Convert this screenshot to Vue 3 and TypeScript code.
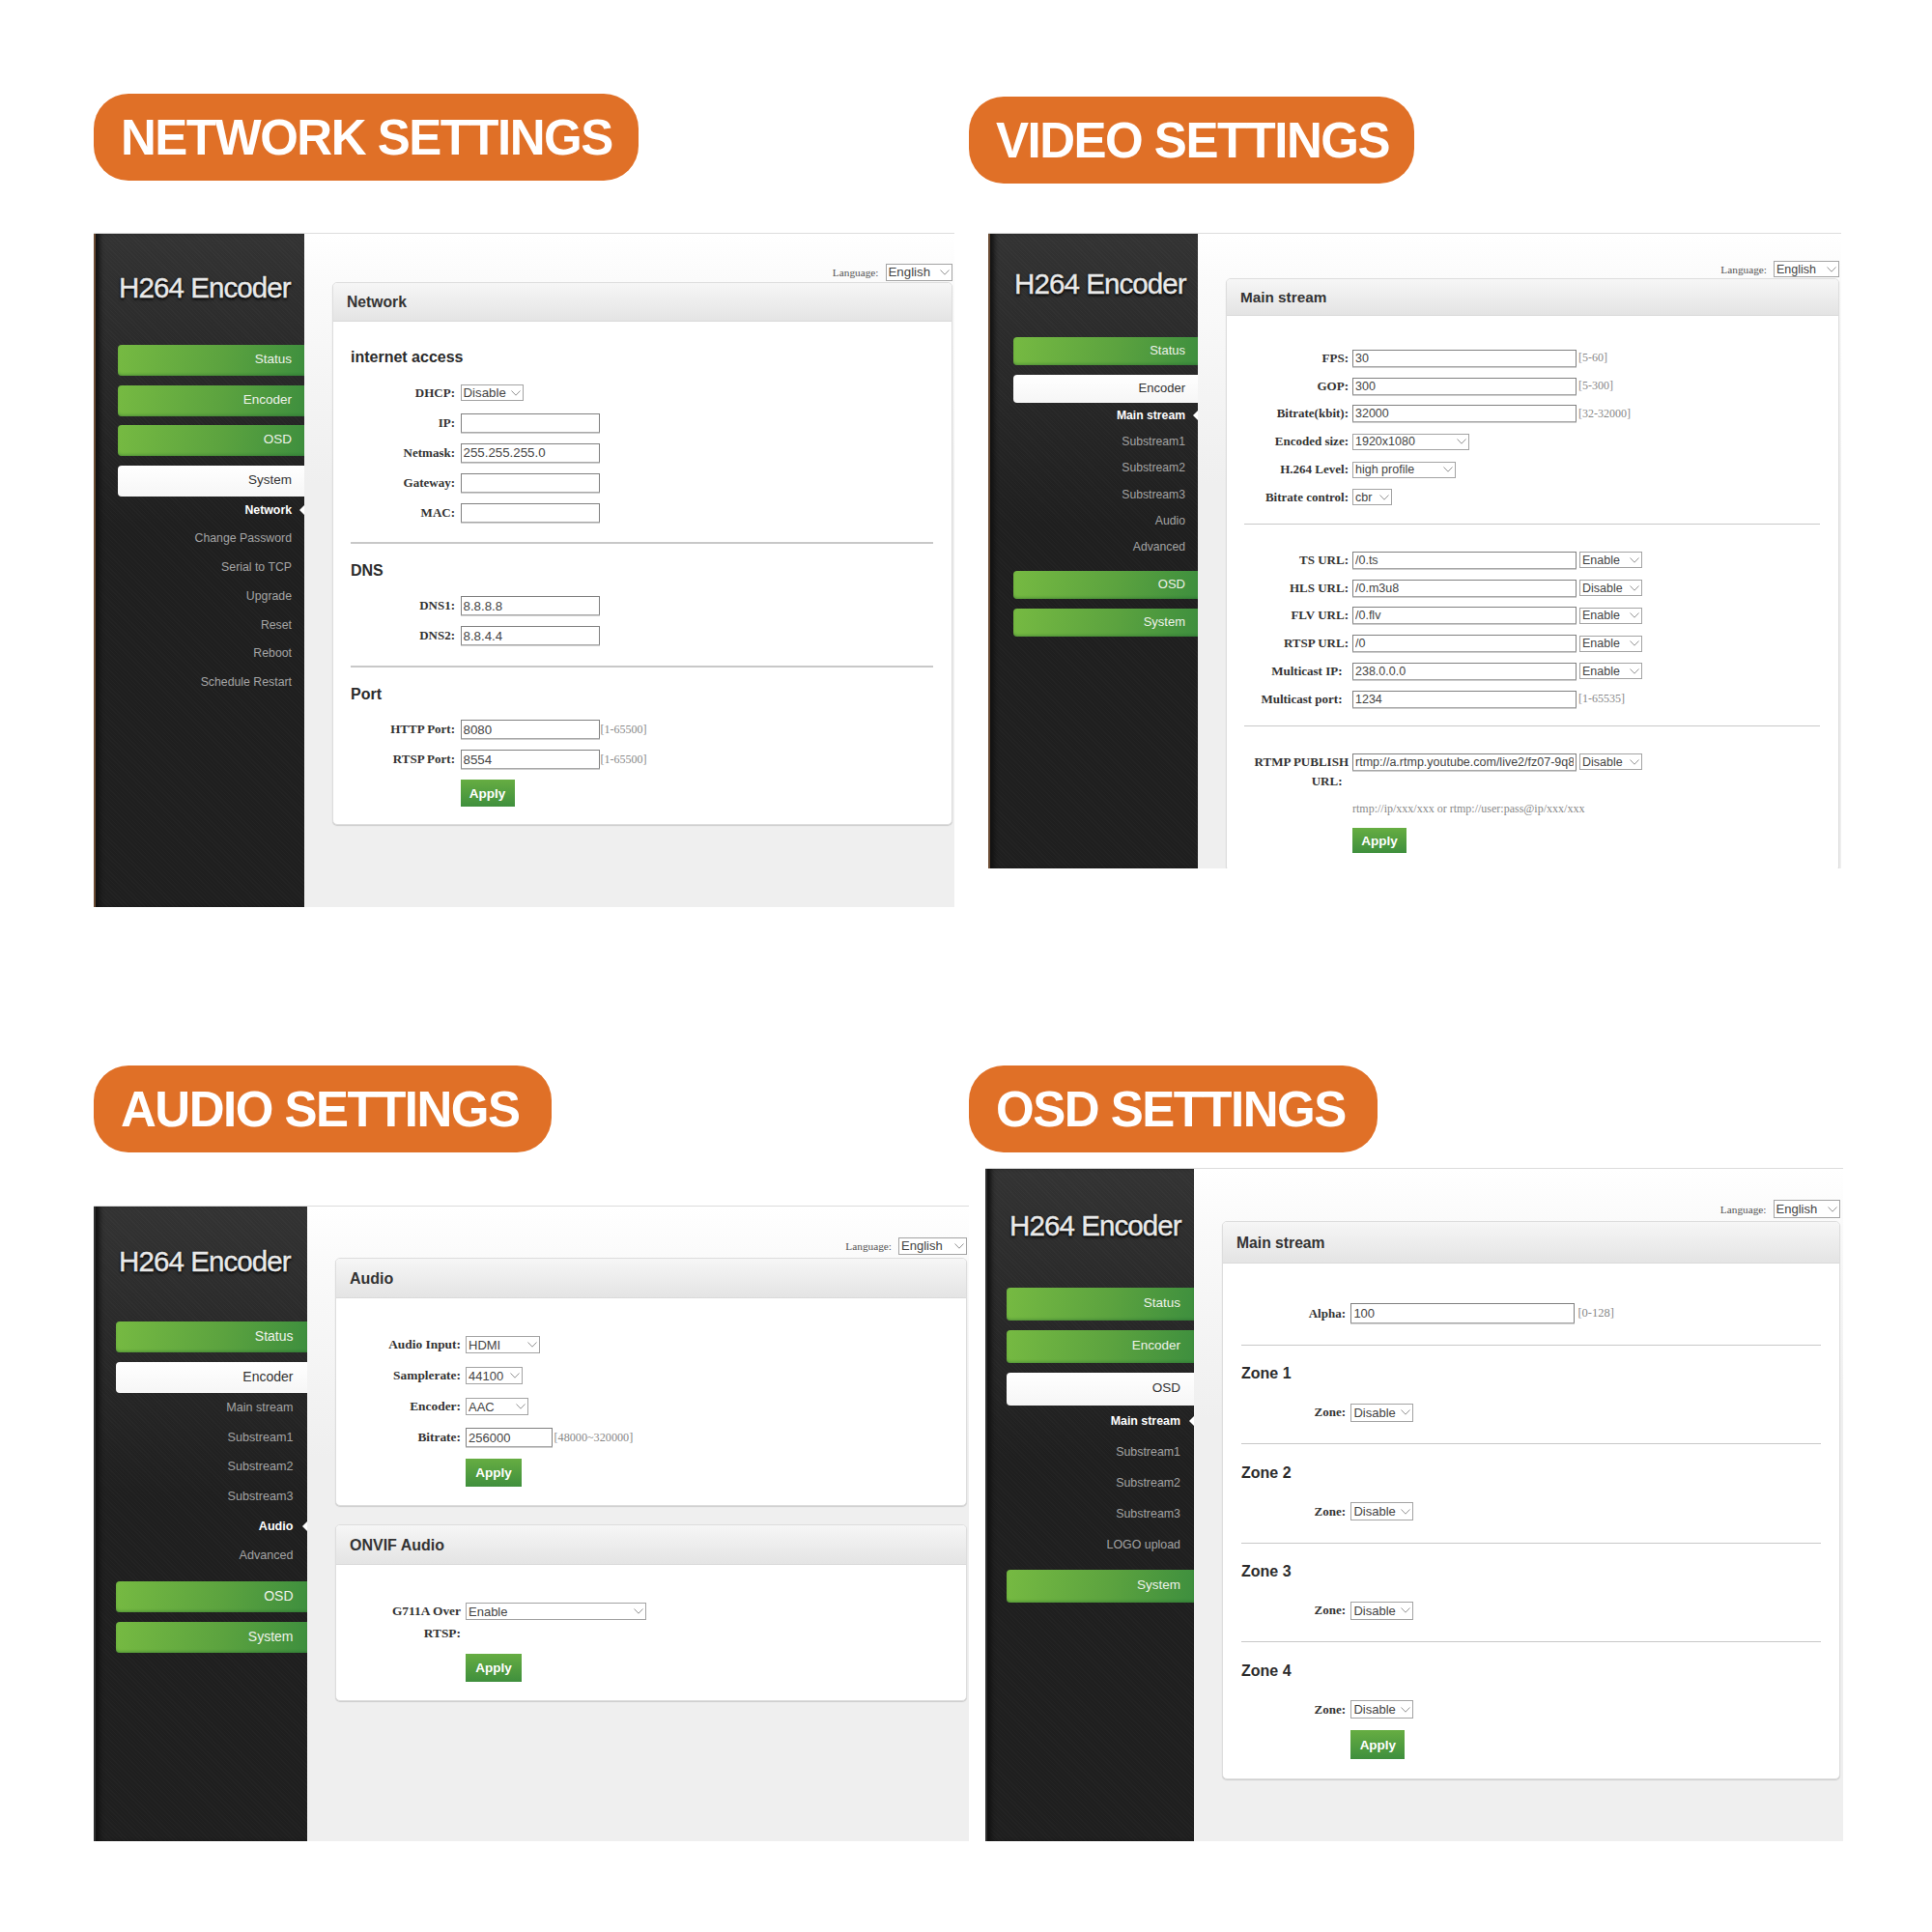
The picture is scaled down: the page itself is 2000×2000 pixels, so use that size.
<template>
  <div class="sheet">
    <section v-for="win in windows" :key="win.key" class="quad" :class="win.key">
      <h1 class="pill">{{ win.pill }}</h1>
      <div class="window">
        <aside class="sidebar">
          <div class="logo"><span>H264 Encoder</span></div>
          <div v-for="item in win.nav" :key="item.label" class="nav-group">
            <div class="nav-btn" :class="{ active: item.subs }">{{ item.label }}</div>
            <div v-if="item.subs" class="sub-list">
              <div
                v-for="sub in item.subs"
                :key="sub"
                class="sub-item"
                :class="{ current: sub === item.current }"
              >{{ sub }}</div>
            </div>
          </div>
        </aside>
        <main class="content">
          <div class="lang-row">
            <span class="lang-label">Language:</span>
            <span class="sel lang-sel">
              <select><option>English</option></select>
              <svg viewBox="0 0 10 6"><path d="M0.5 0.5 5 5.2 9.5 0.5" /></svg>
            </span>
          </div>
          <div v-for="card in win.cards" :key="card.title" class="card">
            <div class="card-head">{{ card.title }}</div>
            <div class="card-body">
              <div v-for="(sec, i) in card.sections" :key="i" class="sec">
                <hr v-if="i > 0" />
                <h3 v-if="sec.heading">{{ sec.heading }}</h3>
                <div v-for="row in sec.rows" :key="row.label + row.value" class="row">
                  <label>{{ row.label }}</label>
                  <div class="ctrl">
                    <span v-if="row.type === 'text'" class="hint">{{ row.value }}</span>
                    <input v-else-if="row.type === 'input'" type="text" :value="row.value" :style="widthOf(row)" />
                    <span v-else class="sel" :style="widthOf(row)">
                      <select><option>{{ row.value }}</option></select>
                      <svg viewBox="0 0 10 6"><path d="M0.5 0.5 5 5.2 9.5 0.5" /></svg>
                    </span>
                    <span v-if="row.hint" class="hint">{{ row.hint }}</span>
                    <span v-if="row.mode" class="sel mode">
                      <select><option>{{ row.mode }}</option></select>
                      <svg viewBox="0 0 10 6"><path d="M0.5 0.5 5 5.2 9.5 0.5" /></svg>
                    </span>
                  </div>
                </div>
              </div>
              <button type="button" class="apply">Apply</button>
            </div>
          </div>
        </main>
      </div>
    </section>
  </div>
</template>

<script setup lang="ts">
interface Row {
  label: string
  type: 'input' | 'select' | 'text'
  value: string
  w?: number
  hint?: string
  mode?: string
}

interface Section {
  heading?: string
  rows: Row[]
}

interface Card {
  title: string
  sections: Section[]
}

interface NavItem {
  label: string
  subs?: string[]
  current?: string
}

interface Win {
  key: string
  pill: string
  nav: NavItem[]
  cards: Card[]
}

const NB = '\u00a0'

function widthOf(row: Row) {
  return row.w ? { width: row.w + 'px' } : undefined
}

function field(label: string, value: string, hint?: string, mode?: string): Row {
  return { label, type: 'input', value, hint, mode }
}

function pick(label: string, value: string, w: number): Row {
  return { label, type: 'select', value, w }
}

const encoderSubs = ['Main stream', 'Substream1', 'Substream2', 'Substream3', 'Audio', 'Advanced']
const zone = (n: number): Section => ({ heading: `Zone ${n}`, rows: [pick('Zone:', 'Disable', 65)] })

const windows: Win[] = [
  {
    key: 'net',
    pill: 'NETWORK SETTINGS',
    nav: [
      { label: 'Status' },
      { label: 'Encoder' },
      { label: 'OSD' },
      {
        label: 'System',
        subs: ['Network', 'Change Password', 'Serial to TCP', 'Upgrade', 'Reset', 'Reboot', 'Schedule Restart'],
        current: 'Network'
      }
    ],
    cards: [
      {
        title: 'Network',
        sections: [
          {
            heading: 'internet access',
            rows: [
              pick('DHCP:', 'Disable', 65),
              field('IP:', ''),
              field('Netmask:', '255.255.255.0'),
              field('Gateway:', ''),
              field('MAC:', '')
            ]
          },
          { heading: 'DNS', rows: [field('DNS1:', '8.8.8.8'), field('DNS2:', '8.8.4.4')] },
          {
            heading: 'Port',
            rows: [field('HTTP Port:', '8080', '[1-65500]'), field('RTSP Port:', '8554', '[1-65500]')]
          }
        ]
      }
    ]
  },
  {
    key: 'vid',
    pill: 'VIDEO SETTINGS',
    nav: [
      { label: 'Status' },
      { label: 'Encoder', subs: encoderSubs, current: 'Main stream' },
      { label: 'OSD' },
      { label: 'System' }
    ],
    cards: [
      {
        title: 'Main stream',
        sections: [
          {
            rows: [
              field('FPS:', '30', '[5-60]'),
              field('GOP:', '300', '[5-300]'),
              field('Bitrate(kbit):', '32000', '[32-32000]'),
              pick('Encoded size:', '1920x1080', 121),
              pick('H.264 Level:', 'high profile', 107),
              pick('Bitrate control:', 'cbr', 41)
            ]
          },
          {
            rows: [
              field('TS URL:', '/0.ts', undefined, 'Enable'),
              field('HLS URL:', '/0.m3u8', undefined, 'Disable'),
              field('FLV URL:', '/0.flv', undefined, 'Enable'),
              field('RTSP URL:', '/0', undefined, 'Enable'),
              field(`Multicast IP:${NB}${NB}`, '238.0.0.0', undefined, 'Enable'),
              field(`Multicast port:${NB}${NB}`, '1234', '[1-65535]')
            ]
          },
          {
            rows: [
              field(`RTMP PUBLISH URL:${NB}${NB}`, 'rtmp://a.rtmp.youtube.com/live2/fz07-9q8', undefined, 'Disable'),
              { label: '', type: 'text', value: 'rtmp://ip/xxx/xxx or rtmp://user:pass@ip/xxx/xxx' }
            ]
          }
        ]
      }
    ]
  },
  {
    key: 'aud',
    pill: 'AUDIO SETTINGS',
    nav: [
      { label: 'Status' },
      { label: 'Encoder', subs: encoderSubs, current: 'Audio' },
      { label: 'OSD' },
      { label: 'System' }
    ],
    cards: [
      {
        title: 'Audio',
        sections: [
          {
            rows: [
              pick('Audio Input:', 'HDMI', 77),
              pick('Samplerate:', '44100', 59),
              pick('Encoder:', 'AAC', 65),
              { label: 'Bitrate:', type: 'input', value: '256000', w: 90, hint: '[48000~320000]' }
            ]
          }
        ]
      },
      {
        title: 'ONVIF Audio',
        sections: [{ rows: [pick('G711A Over RTSP:', 'Enable', 187)] }]
      }
    ]
  },
  {
    key: 'osd',
    pill: 'OSD SETTINGS',
    nav: [
      { label: 'Status' },
      { label: 'Encoder' },
      {
        label: 'OSD',
        subs: ['Main stream', 'Substream1', 'Substream2', 'Substream3', 'LOGO upload'],
        current: 'Main stream'
      },
      { label: 'System' }
    ],
    cards: [
      {
        title: 'Main stream',
        sections: [{ rows: [field('Alpha:', '100', '[0-128]')] }, zone(1), zone(2), zone(3), zone(4)]
      }
    ]
  }
]
</script>

<style>
html,
body {
  margin: 0;
  background: #fff;
}
</style>

<style scoped>
.sheet {
  width: 2000px;
  height: 2000px;
  box-sizing: border-box;
  padding: 97px 0 0 97px;
  display: grid;
  grid-template-columns: 906px 1fr;
  grid-template-rows: 1006px auto;
  font-family: "Liberation Sans", Arial, sans-serif;
}

/* per-window metrics, the four screenshots are not scaled the same */
.net {
  --pill-pr: 27px;
  --win-w: 891px; --win-h: 698px; --win-mt: 54px; --win-ml: 0px; --edge: #6b4c34;
  --logo-h: 112px; --logo-mb: 3px; --logo-pl: 26px;
  --side-w: 218px; --side-pl: 22.5px;
  --btn-h: 32px; --btn-gap: 9.5px; --btn-fs: 13.5px; --btn-pr: 13px;
  --sub-step: 29.8px; --sub-fs: 12.3px;
  --lang-top: 31px; --lang-h: 17.5px; --lang-w: 69px; --card-mt: 1.7px; --pad-r: 2.5px;
  --head-h: 40px; --title-fs: 15.7px;
  --body-pt: 27px; --body-pb: 18px; --hr-mt: 15.3px; --hr-mb: 18px; --h3-mb: 11px;
  --step: 31px; --lh: 20px; --label-w: 108px; --label-gap: 5.5px; --label-fs: 13px;
  --in-w: 144px; --in-h: 20px; --in-fs: 13.3px; --sel-h: 17.5px; --mode-w: 65px;
  --apply-mt: 5.5px; --apply-h: 28px; --apply-w: 56px; --hint-fs: 12px; --hint-gap: 1px; --hr-h: 1.5px; --body-pl: 18px;
}
.vid {
  --pill-pr: 26px;
  --win-w: 883px; --win-h: 658px; --win-mt: 51px; --win-ml: 20px; --edge: #6b4c34;
  --logo-h: 104px; --logo-mb: 2.5px; --logo-pl: 27px;
  --side-w: 217px; --side-pl: 24px;
  --btn-h: 29px; --btn-gap: 10px; --btn-fs: 13px; --btn-pr: 13px;
  --sub-step: 27.4px; --sub-fs: 12.2px;
  --lang-top: 28px; --lang-h: 17px; --lang-w: 68px; --card-mt: 0.5px; --pad-r: 2px;
  --head-h: 38px; --title-fs: 15.3px;
  --body-pt: 30px; --body-pb: 18px; --hr-mt: 12.6px; --hr-mb: 22.6px; --h3-mb: 0px;
  --step: 28.8px; --lh: 20px; --label-w: 108px; --label-gap: 4px; --label-fs: 13px;
  --in-w: 232px; --in-h: 18px; --in-fs: 12.5px; --sel-h: 17px; --mode-w: 65px;
  --apply-mt: 5.5px; --apply-h: 26px; --apply-w: 56px; --hint-fs: 12px; --hint-gap: 2px; --hr-h: 1px; --body-pl: 18px;
}
.aud {
  --pill-pr: 33px;
  --win-w: 906px; --win-h: 658px; --win-mt: 55px; --win-ml: 0px; --edge: #2e2e2e;
  --logo-h: 113px; --logo-mb: 5.5px; --logo-pl: 26px;
  --side-w: 221px; --side-pl: 20.5px;
  --btn-h: 32px; --btn-gap: 10.5px; --btn-fs: 14px; --btn-pr: 14.5px;
  --sub-step: 30.7px; --sub-fs: 12.6px;
  --lang-top: 31.5px; --lang-h: 18px; --lang-w: 71px; --card-mt: 3px; --pad-r: 2px;
  --head-h: 41px; --title-fs: 16px;
  --body-pt: 33px; --body-pb: 19px; --hr-mt: 14px; --hr-mb: 18px; --h3-mb: 11px;
  --step: 32px; --lh: 22.4px; --label-w: 111px; --label-gap: 5px; --label-fs: 13.4px;
  --in-w: 144px; --in-h: 20px; --in-fs: 13px; --sel-h: 18px; --mode-w: 65px;
  --apply-mt: 5px; --apply-h: 29px; --apply-w: 58px; --hint-fs: 12.2px; --hint-gap: 1.5px; --hr-h: 1px; --body-pl: 18px;
}
.osd {
  --pill-pr: 33px;
  --win-w: 888px; --win-h: 697px; --win-mt: 16px; --win-ml: 17px; --edge: #2e2e2e;
  --logo-h: 118px; --logo-mb: 5px; --logo-pl: 25px;
  --side-w: 216px; --side-pl: 20px;
  --btn-h: 34px; --btn-gap: 10px; --btn-fs: 13.5px; --btn-pr: 14px;
  --sub-step: 32px; --sub-fs: 12.4px;
  --lang-top: 32px; --lang-h: 19px; --lang-w: 69px; --card-mt: 3px; --pad-r: 3.5px;
  --head-h: 43px; --title-fs: 15.7px;
  --body-pt: 36.5px; --body-pb: 19.5px; --hr-mt: 17px; --hr-mb: 19.5px; --h3-mb: 15px;
  --step: 30px; --lh: 20px; --label-w: 108px; --label-gap: 5.4px; --label-fs: 13px;
  --in-w: 232px; --in-h: 20.5px; --in-fs: 13px; --sel-h: 19px; --mode-w: 65px;
  --apply-mt: 6.5px; --apply-h: 30px; --apply-w: 56px; --hint-fs: 12.5px; --hint-gap: 3px; --hr-h: 1px; --body-pl: 19px;
}

.quad {
  display: flex;
  flex-direction: column;
  align-items: flex-start;
}

.vid .pill {
  margin-top: 3px;
}

.pill {
  margin: 0;
  height: 90px;
  box-sizing: border-box;
  padding: 0 var(--pill-pr) 0 28px;
  display: flex;
  align-items: center;
  background: #e07027;
  border-radius: 36px;
  color: #fff;
  font-size: 51px;
  font-weight: 700;
  letter-spacing: -1.5px;
  white-space: nowrap;
}

.window {
  margin-top: var(--win-mt);
  margin-left: var(--win-ml);
  width: var(--win-w);
  height: var(--win-h);
  display: flex;
  overflow: hidden;
  border-top: 1px solid #dcdcdc;
  box-sizing: border-box;
  background: linear-gradient(180deg, #fff 0, #fafafa 60px, #efefef 260px);
}

.sidebar {
  flex: none;
  width: var(--side-w);
  box-sizing: border-box;
  padding-left: var(--side-pl);
  background:
    repeating-linear-gradient(45deg, rgba(255, 255, 255, 0.018) 0 1px, transparent 1px 3px),
    linear-gradient(180deg, #333 0, #2b2b2b 110px, #1f1f1f 300px);
  border-left: 2px solid var(--edge);
  box-shadow: inset 6px 0 5px -2px #111;
}

.logo {
  height: var(--logo-h);
  margin-bottom: var(--logo-mb);
  margin-left: calc(var(--logo-pl) - var(--side-pl) - 2px);
  display: flex;
  align-items: center;
  color: #e9e9e9;
  font-size: 29.5px;
  letter-spacing: -0.9px;
  -webkit-text-stroke: 0.4px #e9e9e9;
  white-space: nowrap;
  text-shadow: 0 2px 3px #000, 0 0 2px #000;
}

.nav-group {
  margin-bottom: var(--btn-gap);
}

.nav-btn {
  height: var(--btn-h);
  line-height: calc(var(--btn-h) - 2px);
  box-sizing: border-box;
  padding-right: var(--btn-pr);
  text-align: right;
  font-size: var(--btn-fs);
  color: #eef2ea;
  border-radius: 4px 0 0 4px;
  background: linear-gradient(100deg, #76ba42 0, #5ca33f 55%, #3e8f3e 100%);
  box-shadow: inset 0 -2px 3px -1px rgba(30, 90, 40, 0.45);
}

.nav-btn.active {
  background: linear-gradient(180deg, #fff, #f6f6f6);
  box-shadow: none;
  color: #333;
}

.sub-item {
  position: relative;
  height: var(--sub-step);
  line-height: var(--sub-step);
  padding-right: var(--btn-pr);
  text-align: right;
  font-size: var(--sub-fs);
  color: #a4a4a4;
}

.sub-item.current {
  color: #fff;
  font-weight: 700;
}

.sub-item.current::after {
  content: "";
  position: absolute;
  right: 0;
  top: 50%;
  margin-top: -5px;
  border-style: solid;
  border-width: 5px 5px 5px 0;
  border-color: transparent #fff transparent transparent;
}

.content {
  flex: 1;
  min-width: 0;
  box-sizing: border-box;
  padding: var(--lang-top) var(--pad-r) 0 29px;
}

.lang-row {
  display: flex;
  justify-content: flex-end;
  align-items: center;
  gap: 7px;
  height: var(--lang-h);
  margin-bottom: var(--card-mt);
}

.lang-label {
  font-family: "Liberation Serif", "Times New Roman", serif;
  font-size: 11.3px;
  color: #555;
}

.card {
  background: #fff;
  border: 1px solid #ddd;
  border-radius: 5px;
  box-shadow: 0 1px 1px #ccc;
  margin-bottom: 19px;
  overflow: hidden;
}

.card-head {
  height: var(--head-h);
  line-height: var(--head-h);
  box-sizing: border-box;
  padding-left: 14px;
  font-size: var(--title-fs);
  font-weight: 700;
  color: #333;
  background: linear-gradient(180deg, #f6f6f6, #e4e4e4);
  border-bottom: 1px solid #dadada;
}

.card-body {
  padding: var(--body-pt) 19px var(--body-pb) var(--body-pl);
}

hr {
  margin: var(--hr-mt) 0 var(--hr-mb);
  border: none;
  height: var(--hr-h);
  background: #c8c8c8;
}

h3 {
  margin: 0 0 var(--h3-mb);
  font-size: 16px;
  line-height: 20px;
  font-weight: 700;
  color: #2b2b2b;
}

.row {
  display: flex;
  align-items: flex-start;
  gap: var(--label-gap);
  padding: calc((var(--step) - var(--lh)) / 2) 0;
}

.row label {
  flex: none;
  width: var(--label-w);
  text-align: right;
  font-family: "Liberation Serif", "Times New Roman", serif;
  font-size: var(--label-fs);
  font-weight: 700;
  line-height: var(--lh);
  color: #333;
}

.ctrl {
  height: var(--lh);
  display: flex;
  align-items: center;
  gap: var(--hint-gap);
}

input {
  width: var(--in-w);
  height: var(--in-h);
  box-sizing: border-box;
  padding: 0 2px;
  border: 1px solid #808080;
  border-bottom-color: #a8a8a8;
  box-shadow: 0 1px 0 #ccc;
  border-radius: 0;
  background: #fff;
  color: #444;
  font-family: "Liberation Sans", Arial, sans-serif;
  font-size: var(--in-fs);
  outline: none;
}

.sel {
  position: relative;
  display: inline-block;
  height: var(--sel-h);
  flex: none;
}

.sel select {
  appearance: none;
  display: block;
  width: 100%;
  height: 100%;
  box-sizing: border-box;
  padding: 0 0 0 2px;
  border: 1px solid #a3a3a3;
  border-radius: 0;
  background: #fff;
  color: #444;
  font-family: "Liberation Sans", Arial, sans-serif;
  font-size: var(--in-fs);
}

.sel svg {
  position: absolute;
  right: 3px;
  top: 50%;
  width: 10px;
  height: 6px;
  margin-top: -3px;
  pointer-events: none;
}

.sel path {
  fill: none;
  stroke: #777;
  stroke-width: 0.8;
}

.lang-sel {
  width: var(--lang-w);
}

.mode {
  width: var(--mode-w);
  margin-left: 1px;
}

.hint {
  font-family: "Liberation Serif", "Times New Roman", serif;
  font-size: var(--hint-fs);
  color: #888;
  white-space: nowrap;
}

.apply {
  display: block;
  width: var(--apply-w);
  height: var(--apply-h);
  margin: var(--apply-mt) 0 0 calc(var(--label-w) + var(--label-gap));
  padding: 0;
  border: none;
  background: linear-gradient(180deg, #66ad42, #3f8f3d);
  color: #fff;
  font-family: "Liberation Sans", Arial, sans-serif;
  font-size: 13.5px;
  font-weight: 700;
}
</style>
